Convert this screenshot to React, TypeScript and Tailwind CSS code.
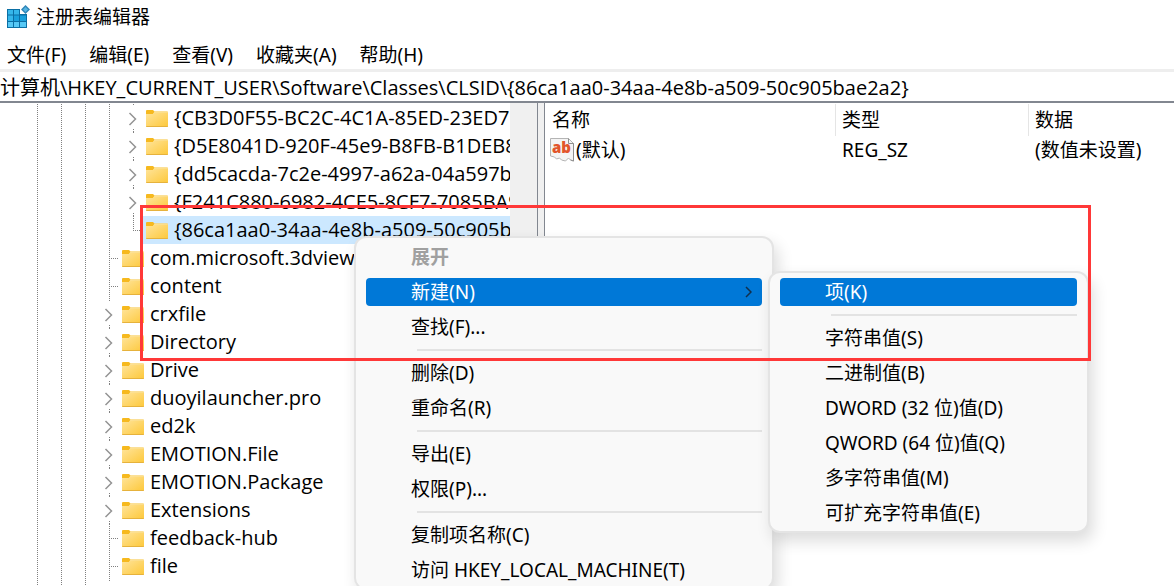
type Branch = 'leaf' | 'closed' | 'last';

interface TreeNode {
  label: string;
  depth: number;
  branch: Branch;
  selected?: boolean;
}

const nodes: TreeNode[] = [
  { label: '{CB3D0F55-BC2C-4C1A-85ED-23ED75', depth: 4, branch: 'closed' },
  { label: '{D5E8041D-920F-45e9-B8FB-B1DEB82', depth: 4, branch: 'closed' },
  { label: '{dd5cacda-7c2e-4997-a62a-04a597b', depth: 4, branch: 'closed' },
  { label: '{F241C880-6982-4CE5-8CF7-7085BA9', depth: 4, branch: 'closed' },
  { label: '{86ca1aa0-34aa-4e8b-a509-50c905b', depth: 4, branch: 'last', selected: true },
  { label: 'com.microsoft.3dviewer', depth: 3, branch: 'leaf' },
  { label: 'content', depth: 3, branch: 'leaf' },
  { label: 'crxfile', depth: 3, branch: 'closed' },
  { label: 'Directory', depth: 3, branch: 'closed' },
  { label: 'Drive', depth: 3, branch: 'closed' },
  { label: 'duoyilauncher.pro', depth: 3, branch: 'closed' },
  { label: 'ed2k', depth: 3, branch: 'closed' },
  { label: 'EMOTION.File', depth: 3, branch: 'closed' },
  { label: 'EMOTION.Package', depth: 3, branch: 'closed' },
  { label: 'Extensions', depth: 3, branch: 'closed' },
  { label: 'feedback-hub', depth: 3, branch: 'leaf' },
  { label: 'file', depth: 3, branch: 'leaf' },
  { label: '', depth: 3, branch: 'closed' },
];

interface Entry {
  label?: string;
  separator?: boolean;
  disabled?: boolean;
  active?: boolean;
  submenu?: boolean;
}

const contextEntries: Entry[] = [
  { label: '展开', disabled: true },
  { label: '新建(N)', active: true, submenu: true },
  { label: '查找(F)...' },
  { separator: true },
  { label: '删除(D)' },
  { label: '重命名(R)' },
  { separator: true },
  { label: '导出(E)' },
  { label: '权限(P)...' },
  { separator: true },
  { label: '复制项名称(C)' },
  { label: '访问 HKEY_LOCAL_MACHINE(T)' },
];

const newEntries: Entry[] = [
  { label: '项(K)', active: true },
  { separator: true },
  { label: '字符串值(S)' },
  { label: '二进制值(B)' },
  { label: 'DWORD (32 位)值(D)' },
  { label: 'QWORD (64 位)值(Q)' },
  { label: '多字符串值(M)' },
  { label: '可扩充字符串值(E)' },
];

function RegeditIcon() {
  return (
    <svg width="24" height="24" viewBox="0 0 24 24" aria-hidden="true">
      <path d="M0 4h13v5h7v14H0z" fill="#0b6fa4" />
      <path d="M1 5h5v4.500H1zM7 5h5v4.500H7zM1 10.500h5v5.500H1z" fill="#35b6ea" />
      <path d="M7 10.500h5v5.500H7zM13 10.500h6v5.500h-6z" fill="#19a0dc" />
      <path d="M1 17h5v5H1zM7 17h5v5H7zM13 17h6v5h-6z" fill="#56c8f5" />
      <path d="M18.500 0L23 4.500 18.500 9 14 4.500z" fill="#2f86b8" />
      <path d="M18.500 2L21 4.500 18.500 7 16 4.500z" fill="#55b5e2" />
    </svg>
  );
}

function FolderIcon() {
  return (
    <svg className="shrink-0" width="22" height="17" viewBox="0 0 22 17" aria-hidden="true">
      <defs>
        <linearGradient id="folder" x1="0" y1="0" x2="1" y2="1">
          <stop offset="0" stopColor="#ffe49a" />
          <stop offset="1" stopColor="#fdc83a" />
        </linearGradient>
      </defs>
      <path d="M0 1q0-1 1-1h6l1.500 1.500H21q1 0 1 1V5H0z" fill="#f6b91f" />
      <path d="M8.500 1.500H21q1 0 1 1V4H7z" fill="#fbe3a0" />
      <path d="M0 4h7l1.500-1.500H22V16q0 1-1 1H1q-1 0-1-1z" fill="url(#folder)" />
      <path d="M0 16h22q0 1-1 1H1q-1 0-1-1z" fill="#e6b23c" />
    </svg>
  );
}

function StringIcon() {
  return (
    <svg className="shrink-0" width="24" height="24" viewBox="0 0 24 24" aria-hidden="true">
      <path d="M.5.500h18l5 5V23l-3-1-2-2-3 3-4-1-2-2-3 1-2-2-4-1z" fill="#f4f4f4" stroke="#b4b4b4" />
      <path d="M18.500.500v5h5M23.500 5.500V23l-3-1" fill="none" stroke="#8f8f8f" />
      <text x="2" y="15" className="fill-[#e2552b] font-['Open_Sans',sans-serif] text-[15px] font-extrabold">ab</text>
    </svg>
  );
}

function Guide() {
  return (
    <svg className="shrink-0" width="24" height="28" aria-hidden="true">
      <path d="M11.500 0v28" stroke="#808080" strokeDasharray="1 1" />
    </svg>
  );
}

function Joint({ branch }: { branch: Branch }) {
  return (
    <svg className="shrink-0" width="20" height="28" aria-hidden="true">
      {branch === 'closed' && (
        <>
          <path d="M11.500 0v2M11.500 25v3" stroke="#808080" strokeDasharray="1 1" />
          <path d="M7.500 9l6 6-6 6" fill="none" stroke="#949494" strokeWidth="1.500" />
        </>
      )}
      {branch === 'leaf' && <path d="M11.500 0v28M13 14.500h7" stroke="#808080" strokeDasharray="1 1" />}
      {branch === 'last' && <path d="M11.500 0v15M13 14.500h7" stroke="#808080" strokeDasharray="1 1" />}
    </svg>
  );
}

function TreeRow({ node }: { node: TreeNode }) {
  return (
    <li role="treeitem" aria-selected={!!node.selected} className="flex h-7 shrink-0 pl-[26px]">
      {Array.from({ length: node.depth }, (_, i) => (
        <Guide key={i} />
      ))}
      <Joint branch={node.branch} />
      <button
        className={`flex h-7 items-center gap-1.5 whitespace-nowrap pl-1 ${node.selected ? 'grow bg-[#cce8ff]' : ''}`}
      >
        <FolderIcon />
        <span>{node.label}</span>
      </button>
    </li>
  );
}

function Menu({ entries }: { entries: Entry[] }) {
  return (
    <div
      role="menu"
      className="flex flex-col gap-[7px] rounded-xl border-2 border-[#e4e4e4] bg-[#f9f9f9] px-2.5 pt-[5px] pb-1 shadow-[4px_8px_16px_rgba(0,0,0,0.14)]"
    >
      {entries.map((entry, i) =>
        entry.separator ? (
          <div key={i} role="separator" className="flex h-1 items-center pl-[51px]">
            <div className="h-0.5 w-full bg-[#e3e3e3]" />
          </div>
        ) : (
          <button
            key={i}
            role="menuitem"
            disabled={entry.disabled}
            className={`flex h-7 items-center justify-between rounded pl-[45px] pr-2.5 text-left whitespace-nowrap ${
              entry.active ? 'bg-[#0078d7] text-white' : ''
            } ${entry.disabled ? 'font-bold text-[#a0a0a0]' : ''}`}
          >
            <span>{entry.label}</span>
            {entry.submenu && (
              <svg width="7" height="12" viewBox="0 0 7 12" aria-hidden="true">
                <path d="M1 1l5 5-5 5" fill="none" stroke="#12304d" strokeWidth="1.500" />
              </svg>
            )}
          </button>
        ),
      )}
    </div>
  );
}

export default function App() {
  return (
    <div className="relative flex h-screen flex-col overflow-hidden bg-white font-['Noto_Sans','Noto_Sans_CJK_SC',sans-serif] text-[19px] leading-7 text-black">
      <header className="flex h-[34px] shrink-0 items-center gap-[5px] pl-[7px]">
        <RegeditIcon />
        <h1>注册表编辑器</h1>
      </header>
      <nav className="flex h-[35px] shrink-0 items-center gap-[23px] pt-1.5 pl-[7px]">
        <button>文件(F)</button>
        <button>编辑(E)</button>
        <button>查看(V)</button>
        <button>收藏夹(A)</button>
        <button>帮助(H)</button>
      </nav>
      <input
        aria-label="地址"
        className="h-[34px] w-full shrink-0 border-t-[3px] border-b-2 border-t-[#eeeeee] border-b-[#828790] font-['Open_Sans','Noto_Sans_CJK_SC',sans-serif] text-[20px] outline-none"
        defaultValue="计算机\HKEY_CURRENT_USER\Software\Classes\CLSID\{86ca1aa0-34aa-4e8b-a509-50c905bae2a2}"
      />

      <main className="flex min-h-0 flex-1">
        <ul
          role="tree"
          className="flex w-[510px] shrink-0 flex-col overflow-hidden pt-px font-['Open_Sans','Noto_Sans_CJK_SC',sans-serif] text-[20px]"
        >
          {nodes.map((node, i) => (
            <TreeRow key={i} node={node} />
          ))}
        </ul>
        <div className="w-7 shrink-0 border-r border-[#828790] bg-[#f0f0f0]" />
        <div className="w-[7px] shrink-0 border-r border-[#828790] bg-[#f0f0f0]" />
        <section className="min-w-0 flex-1 pt-px">
          <table className="w-full table-fixed border-separate border-spacing-0 text-left">
            <colgroup>
              <col className="w-[291px]" />
              <col className="w-[193px]" />
              <col />
            </colgroup>
            <thead>
              <tr className="h-8">
                <th className="border-r border-[#e5e5e5] p-0 pl-[7px] font-normal">名称</th>
                <th className="border-r border-[#e5e5e5] p-0 pl-1.5 font-normal">类型</th>
                <th className="p-0 pl-1.5 font-normal">数据</th>
              </tr>
            </thead>
            <tbody>
              <tr className="h-7">
                <td className="p-0 pl-[5px]">
                  <span className="flex items-center gap-0.5">
                    <StringIcon />
                    (默认)
                  </span>
                </td>
                <td className="p-0 pl-1.5">REG_SZ</td>
                <td className="p-0 pl-1.5">(数值未设置)</td>
              </tr>
            </tbody>
          </table>
        </section>
      </main>

      <div className="absolute top-[236px] left-[354px] w-[420px]">
        <Menu entries={contextEntries} />
      </div>
      <div className="absolute top-[271px] left-[768px] w-[321px]">
        <Menu entries={newEntries} />
      </div>
      <div className="pointer-events-none absolute top-[205px] left-[140px] h-[156px] w-[951px] border-[3px] border-[#ff3838]" />
    </div>
  );
}
